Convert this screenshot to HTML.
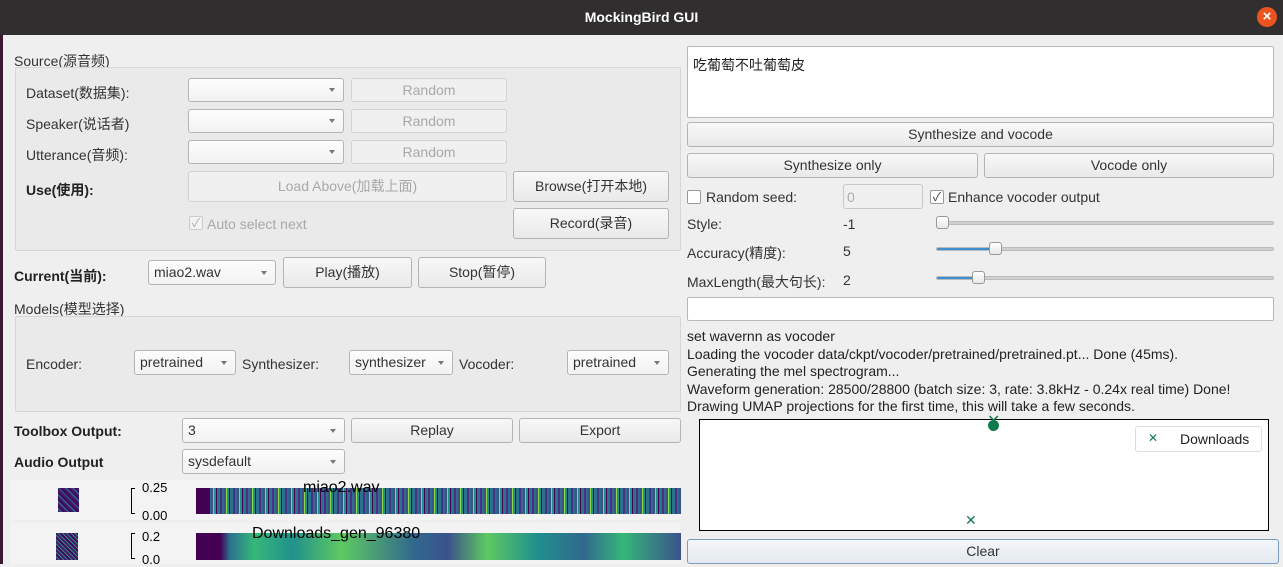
<!DOCTYPE html>
<html><head><meta charset="utf-8"><style>
*{box-sizing:border-box;margin:0;padding:0}
body{width:1283px;height:564px;overflow:hidden;background:#efefef;font-family:"Liberation Sans","Noto Sans CJK SC",sans-serif;font-size:14px;color:#333;position:relative}
.a{position:absolute;white-space:nowrap}
.title{left:0;top:0;width:1283px;height:35px;background:#302e2e;color:#fff;font-weight:bold;text-align:center;line-height:34px;font-size:14px}
.close{left:1257px;top:7px;width:20px;height:20px;border-radius:50%;background:#e95420;color:#fff;text-align:center;line-height:19px;font-size:15px;font-weight:bold}
.btn{position:absolute;border:1px solid #b4b4b4;border-radius:3px;background:linear-gradient(#f8f8f8,#e9e9e9);text-align:center;color:#333;white-space:nowrap}
.dis{border-color:#d2d2d2;color:#a8a8a8;background:#f0f0f0}
.cb{position:absolute;border:1px solid #b4b4b4;border-radius:3px;background:linear-gradient(#fdfdfd,#f2f2f2);padding-left:5px;white-space:nowrap}
.cb:after{content:"";position:absolute;right:8px;top:50%;margin-top:-2px;border-left:3px solid transparent;border-right:3px solid transparent;border-top:4px solid #777}
.grp{position:absolute;border:1px solid #d6d6d6;background:#eaeaea;border-radius:2px}
b{font-weight:bold;color:#222}
.chk{position:absolute;width:14px;height:14px;border:1px solid #999;background:#fff;border-radius:2px;font-size:12px;line-height:12px;text-align:center}
.track{position:absolute;height:4px;background:#d0d0d0;border-radius:2px;border:1px solid #bbb}
.handle{position:absolute;width:13px;height:13px;border:1px solid #999;border-radius:3px;background:linear-gradient(#fff,#e8e8e8)}
.spec{position:absolute}
.x{position:absolute;color:#117a4a;font-weight:bold;font-family:"DejaVu Sans",sans-serif}
</style></head><body>
<div class="a title">MockingBird GUI</div>
<div class="a close">×</div>
<div class="a" style="left:0;top:35px;width:3px;height:529px;background:#3a1a30"></div>

<div class="a" style="left:14px;top:51px">Source(源音频)</div>
<div class="grp" style="left:15px;top:67px;width:666px;height:184px"></div>
<div class="a" style="left:26px;top:83px">Dataset(数据集):</div>
<div class="a" style="left:26px;top:114px">Speaker(说话者)</div>
<div class="a" style="left:26px;top:145px">Utterance(音频):</div>
<div class="cb dis" style="left:188px;top:78px;width:156px;height:24px"></div>
<div class="cb dis" style="left:188px;top:109px;width:156px;height:24px"></div>
<div class="cb dis" style="left:188px;top:140px;width:156px;height:24px"></div>
<div class="btn dis" style="left:351px;top:78px;width:156px;height:24px;line-height:22px">Random</div>
<div class="btn dis" style="left:351px;top:109px;width:156px;height:24px;line-height:22px">Random</div>
<div class="btn dis" style="left:351px;top:140px;width:156px;height:24px;line-height:22px">Random</div>
<div class="a" style="left:26px;top:180px"><b>Use(使用):</b></div>
<div class="btn dis" style="left:188px;top:171px;width:319px;height:31px;line-height:29px">Load Above(加载上面)</div>
<div class="btn" style="left:513px;top:171px;width:156px;height:31px;line-height:29px">Browse(打开本地)</div>
<div class="chk" style="left:189px;top:216px;border-color:#ccc;background:#f3f3f3;color:#aaa">✓</div>
<div class="a" style="left:207px;top:216px;color:#a8a8a8">Auto select next</div>
<div class="btn" style="left:513px;top:208px;width:156px;height:31px;line-height:29px">Record(录音)</div>

<div class="a" style="left:14px;top:266px"><b>Current(当前):</b></div>
<div class="cb" style="left:148px;top:260px;width:128px;height:25px;line-height:23px">miao2.wav</div>
<div class="btn" style="left:283px;top:257px;width:129px;height:31px;line-height:29px">Play(播放)</div>
<div class="btn" style="left:418px;top:257px;width:128px;height:31px;line-height:29px">Stop(暂停)</div>

<div class="a" style="left:14px;top:299px">Models(模型选择)</div>
<div class="grp" style="left:15px;top:316px;width:666px;height:96px"></div>
<div class="a" style="left:26px;top:356px">Encoder:</div>
<div class="cb" style="left:134px;top:350px;width:102px;height:25px;line-height:23px">pretrained</div>
<div class="a" style="left:242px;top:356px">Synthesizer:</div>
<div class="cb" style="left:349px;top:350px;width:104px;height:25px;line-height:23px">synthesizer</div>
<div class="a" style="left:459px;top:356px">Vocoder:</div>
<div class="cb" style="left:567px;top:350px;width:102px;height:25px;line-height:23px">pretrained</div>

<div class="a" style="left:14px;top:423px"><b>Toolbox Output:</b></div>
<div class="cb" style="left:182px;top:418px;width:163px;height:25px;line-height:23px">3</div>
<div class="btn" style="left:351px;top:418px;width:162px;height:25px;line-height:23px">Replay</div>
<div class="btn" style="left:519px;top:418px;width:162px;height:25px;line-height:23px">Export</div>
<div class="a" style="left:14px;top:454px"><b>Audio Output</b></div>
<div class="cb" style="left:182px;top:449px;width:163px;height:25px;line-height:23px">sysdefault</div>

<div class="a" style="left:10px;top:480px;width:670px;height:40px;background:#f3f3f3"></div>
<div class="a" style="left:10px;top:523px;width:670px;height:41px;background:#f3f3f3"></div>
<div class="a" style="left:58px;top:488px;width:21px;height:24px;background:repeating-linear-gradient(45deg,#3b1f6e 0 2px,#2a7b8e 2px 3px,#44075a 3px 5px)"></div>
<div class="a" style="left:56px;top:533px;width:22px;height:27px;background:repeating-linear-gradient(45deg,#3b1f6e 0 2px,#2a7b8e 2px 3px,#44075a 3px 5px,#35b779 5px 6px)"></div>
<div class="a" style="left:131px;top:488px;width:4px;height:26px;border:1px solid #000;border-right:none"></div>
<div class="a" style="left:142px;top:480px;font-size:13px;color:#000">0.25</div>
<div class="a" style="left:142px;top:508px;font-size:13px;color:#000">0.00</div>
<div class="a" style="left:131px;top:533px;width:4px;height:26px;border:1px solid #000;border-right:none"></div>
<div class="a" style="left:142px;top:529px;font-size:13px;color:#000">0.2</div>
<div class="a" style="left:142px;top:552px;font-size:13px;color:#000">0.0</div>
<div class="spec" style="left:196px;top:488px;width:485px;height:26px;background:repeating-linear-gradient(90deg,#31688e 0 2px,#3b528b 2px 4px,#8fd744 4px 5px,#21918c 5px 7px,#440154 7px 8px,#2c728e 8px 11px,#46327e 11px 13px);"></div>
<div class="spec" style="left:196px;top:488px;width:14px;height:26px;background:#440154"></div>
<div class="spec" style="left:196px;top:533px;width:485px;height:27px;background:linear-gradient(90deg,#440154 0 5%,#2c728e 7%,#35b779 12%,#21918c 20%,#5ec962 30%,#31688e 45%,#3b528b 52%,#5ec962 60%,#21918c 70%,#31688e 80%,#35b779 88%,#3b528b 100%)"></div>
<div class="a" style="left:303px;top:479px;font-size:16px;color:#000">miao2.wav</div>
<div class="a" style="left:252px;top:525px;font-size:16px;color:#000">Downloads_gen_96380</div>

<div class="a" style="left:687px;top:46px;width:587px;height:72px;background:#fff;border:1px solid #b8b8b8;border-radius:2px;padding:8px 5px;color:#222">吃葡萄不吐葡萄皮</div>
<div class="btn" style="left:687px;top:122px;width:587px;height:25px;line-height:23px">Synthesize and vocode</div>
<div class="btn" style="left:687px;top:153px;width:291px;height:25px;line-height:23px">Synthesize only</div>
<div class="btn" style="left:984px;top:153px;width:290px;height:25px;line-height:23px">Vocode only</div>
<div class="chk" style="left:687px;top:190px"></div>
<div class="a" style="left:706px;top:189px">Random seed:</div>
<div class="a" style="left:843px;top:184px;width:80px;height:25px;border:1px solid #c8c8c8;border-radius:3px;background:#f0f0f0;color:#aaa;padding:4px 3px">0</div>
<div class="chk" style="left:930px;top:190px">✓</div>
<div class="a" style="left:948px;top:189px">Enhance vocoder output</div>
<div class="a" style="left:687px;top:216px">Style:</div><div class="a" style="left:843px;top:216px">-1</div>
<div class="a" style="left:687px;top:243px">Accuracy(精度):</div><div class="a" style="left:843px;top:243px">5</div>
<div class="a" style="left:687px;top:272px">MaxLength(最大句长):</div><div class="a" style="left:843px;top:272px">2</div>
<div class="track" style="left:936px;top:221px;width:338px"></div>
<div class="handle" style="left:936px;top:216px"></div>
<div class="track" style="left:936px;top:247px;width:338px;background:linear-gradient(90deg,#3d8fd1 0 58px,#d0d0d0 58px)"></div>
<div class="handle" style="left:989px;top:242px"></div>
<div class="track" style="left:936px;top:276px;width:338px;background:linear-gradient(90deg,#3d8fd1 0 40px,#d0d0d0 40px)"></div>
<div class="handle" style="left:972px;top:271px"></div>
<div class="a" style="left:687px;top:297px;width:587px;height:24px;background:#fff;border:1px solid #b8b8b8;border-radius:2px"></div>
<div class="a" style="left:687px;top:328px;line-height:17.5px;color:#222">set wavernn as vocoder<br>Loading the vocoder data/ckpt/vocoder/pretrained/pretrained.pt... Done (45ms).<br>Generating the mel spectrogram...<br>Waveform generation: 28500/28800 (batch size: 3, rate: 3.8kHz - 0.24x real time) Done!<br>Drawing UMAP projections for the first time, this will take a few seconds.</div>
<div class="a" style="left:699px;top:419px;width:570px;height:112px;background:#fff;border:1px solid #000"></div>
<div class="a" style="left:988px;top:420px;width:11px;height:11px;border-radius:50%;background:#117a4a"></div>
<div class="x" style="left:987px;top:411px;font-size:16px">✕</div>
<div class="x" style="left:965px;top:513px;font-size:14px">✕</div>
<div class="a" style="left:1135px;top:426px;width:127px;height:26px;border:1px solid #ddd;border-radius:3px;background:#fff"></div>
<div class="x" style="left:1148px;top:431px;font-size:12px">✕</div>
<div class="a" style="left:1180px;top:431px;color:#222">Downloads</div>
<div class="btn" style="left:687px;top:539px;width:592px;height:25px;line-height:23px;border-color:#7a9cbf;background:linear-gradient(#f4f7fa,#e3e9ef)">Clear</div>
</body></html>
